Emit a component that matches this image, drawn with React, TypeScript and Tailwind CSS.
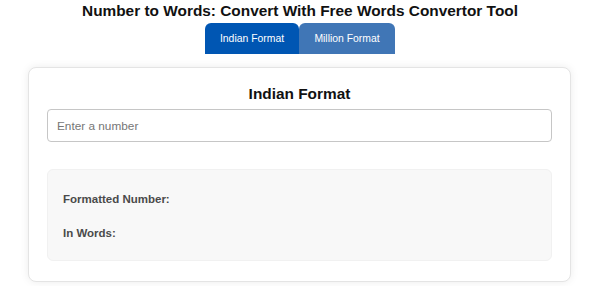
import React from "react";

export default function App() {
  return (
    <div
      className="w-[600px] h-[286px] bg-white overflow-hidden"
      style={{ fontFamily: '"Liberation Sans", Arial, sans-serif' }}
    >
      <h1 className="pt-[2px] text-center text-[15.4px] leading-[18px] font-bold text-[#111]">
        Number to Words: Convert With Free Words Convertor Tool
      </h1>
      <div className="mt-[3px] flex justify-center">
        <div className="flex">
          <button className="h-[31px] w-[94px] rounded-t-[6px] bg-[#0056b3] text-[10.4px] text-white">
            Indian Format
          </button>
          <button className="h-[31px] w-[96px] rounded-t-[6px] bg-[#4076b6] text-[10.4px] text-white">
            Million Format
          </button>
        </div>
      </div>
      <div className="ml-[28px] mt-[13px] w-[543px] rounded-[8px] border border-[#e4e4e4] bg-white px-[18px] pt-[17px] pb-[20px] shadow-[0_0_8px_rgba(0,0,0,0.08)]">
        <h2 className="text-center text-[15.4px] leading-[18px] font-bold text-[#111]">
          Indian Format
        </h2>
        <input
          type="text"
          placeholder="Enter a number"
          className="mt-[6px] block h-[33px] w-full rounded-[4px] border border-[#c6c6c6] px-[9px] text-[11.8px] outline-none placeholder:text-[#767676]"
        />
        <div className="mt-[27px] flex flex-col gap-[20px] rounded-[6px] border border-[#f1f1f1] bg-[#f8f8f8] px-[15px] pt-[22px] pb-[20px]">
          <p className="text-[11.5px] leading-[14px] font-bold text-[#4a4a4a]">
            Formatted Number:
          </p>
          <p className="text-[11.5px] leading-[14px] font-bold text-[#4a4a4a]">
            In Words:
          </p>
        </div>
      </div>
    </div>
  );
}
